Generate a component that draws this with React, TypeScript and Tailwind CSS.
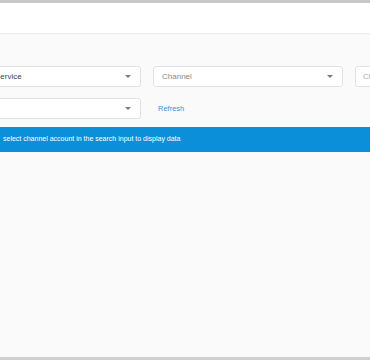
import React from 'react';

const Caret = () => (
    <svg width="6" height="3" viewBox="0 0 6 3" className="shrink-0">
        <path d="M0 0 L6 0 L3 3 Z" fill="#7a7a7a" />
    </svg>
);

const Select = ({ label, width, placeholder }: { label: string; width: string; placeholder?: boolean }) => (
    <div className={`${width} h-[21px] shrink-0 flex items-center justify-between pl-[8px] pr-[9px] bg-white border border-[#e3e3e3] rounded-[3px]`}>
        <span className={`text-[8px] ${placeholder ? 'text-[#8a8a8a]' : 'text-[#444]'}`}>{label}</span>
        <Caret />
    </div>
);

const App = () => {
    return (
        <div className="w-[370px] h-[360px] flex flex-col bg-[#fafafa] overflow-hidden" style={{ fontFamily: '"Liberation Sans", Arial, sans-serif' }}>
            <div className="h-[3px] bg-[#c8c8c8] shrink-0" />
            <div className="h-[31px] bg-white border-b border-[#ececec] shrink-0" />

            <div className="flex flex-col gap-[11px] pt-[32px] -ml-[14px]">
                <div className="flex gap-[12px]">
                    <Select label="Service" width="w-[155px]" />
                    <Select label="Channel" width="w-[190px]" placeholder />
                    <div className="w-[120px] h-[21px] shrink-0 flex items-center pl-[7px] bg-white border border-[#e3e3e3] rounded-[3px]">
                        <span className="text-[8px] text-[#aaa]">Channel account</span>
                    </div>
                </div>
                <div className="flex items-center gap-[17px]">
                    <Select label="" width="w-[155px]" />
                    <button className="text-[7.5px] text-[#3a96d6]">Refresh</button>
                </div>
            </div>

            <div className="mt-[8px] h-[25px] bg-[#0b8fd8] flex items-center pl-[3px] shrink-0">
                <span className="text-[7px] text-white">select channel account in the search input to display data</span>
            </div>

            <div className="flex-1" />
            <div className="h-[3px] bg-[#cfcfcf] shrink-0" />
        </div>
    );
};

export default App;
